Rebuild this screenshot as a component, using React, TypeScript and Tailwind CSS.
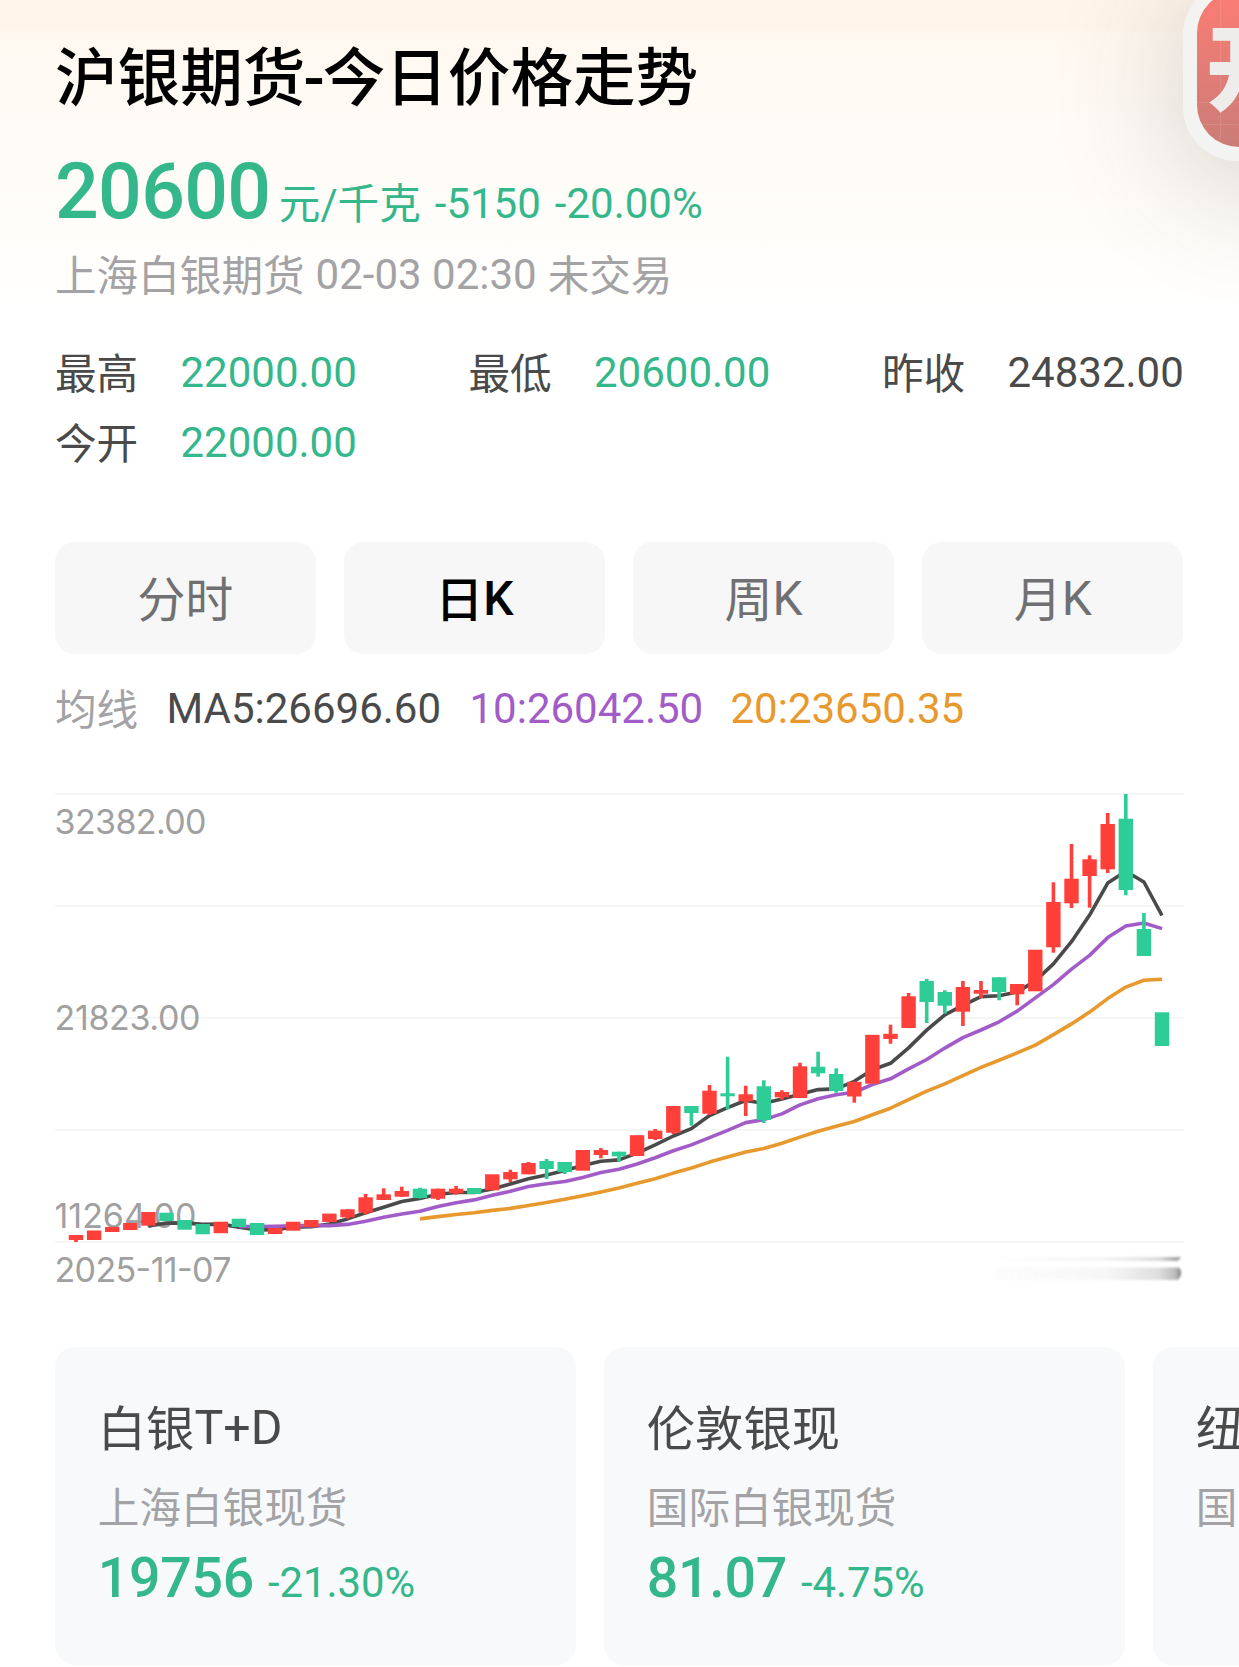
import React from "react";

// [direction, body top, body bottom, wick top, wick bottom]
type Candle = [1 | 0, number, number, number?, number?];

const candles: Candle[] = [
  [1, 1235, 1240, 1235, 1242],
  [1, 1230.5, 1240],
  [1, 1227, 1232],
  [1, 1223, 1230],
  [1, 1212, 1225.7],
  [0, 1212.7, 1221],
  [0, 1220, 1229.7],
  [0, 1224, 1234.3],
  [1, 1221.7, 1233.2],
  [0, 1218.7, 1227],
  [0, 1223, 1235],
  [1, 1228, 1234],
  [1, 1221.7, 1230.7],
  [1, 1220, 1227],
  [1, 1213.6, 1222],
  [1, 1209.3, 1217.3, 1209.3, 1218.7],
  [1, 1197.3, 1212.7, 1194, 1214.3],
  [1, 1194.3, 1200, 1188.3, 1200],
  [1, 1191, 1196.7, 1186.7, 1196.7],
  [0, 1188.7, 1198, 1187.7, 1198.5],
  [1, 1188.7, 1198.7, 1188.7, 1200],
  [1, 1188.7, 1193.3, 1186, 1194.7],
  [0, 1188, 1194],
  [1, 1174.3, 1190.3],
  [1, 1172, 1179.3, 1169.7, 1182],
  [1, 1163, 1174.3, 1162, 1174.3],
  [0, 1161, 1169, 1159, 1179],
  [0, 1162, 1172, 1162, 1174],
  [1, 1150, 1170.7],
  [1, 1150, 1155, 1148, 1158.3],
  [0, 1151.7, 1156.3, 1151.7, 1161.5],
  [1, 1135.2, 1156],
  [1, 1130.7, 1139, 1129, 1140],
  [1, 1106, 1132.7, 1106, 1134],
  [0, 1106, 1113, 1106, 1125.7],
  [1, 1090.7, 1113.7, 1085, 1115],
  [0, 1093.3, 1096.3, 1056.7, 1109.3],
  [1, 1094.3, 1101.3, 1085.7, 1116],
  [0, 1086.3, 1120, 1080.3, 1123],
  [1, 1092, 1097.3, 1090.3, 1099.7],
  [1, 1066.3, 1098, 1062.7, 1098],
  [0, 1066.7, 1073.3, 1051.7, 1076.7],
  [0, 1074, 1091, 1068.3, 1092.7],
  [1, 1081.8, 1096.5, 1081.8, 1102.7],
  [1, 1034.8, 1083.7],
  [1, 1033.8, 1039, 1024.7, 1043.7],
  [1, 996.3, 1028, 993, 1028],
  [0, 981, 1002, 979, 1023],
  [0, 992, 1005.7, 990.3, 1013.7],
  [1, 987, 1011.7, 981, 1026],
  [1, 990, 993.7, 981, 998],
  [0, 977.3, 992, 977.3, 1000.3],
  [1, 984, 994.3, 984, 1005.3],
  [1, 949.7, 991.3],
  [1, 902, 947.3, 882.3, 952.7],
  [1, 878.7, 903.3, 844, 908],
  [1, 859.3, 876, 855.3, 907.7],
  [1, 824, 869.3, 813, 873],
  [0, 818.7, 890, 794, 895.3],
  [0, 929, 956, 913, 956],
  [0, 1012.3, 1046],
];

const RED = "#ff403a";
const GREEN = "#2ecc96";
const centerX = (i: number) => 76 + i * 18.1;
const closeY = (c: Candle) => (c[0] ? c[1] : c[2]);

function average(period: number) {
  const pts: string[] = [];
  for (let i = period - 1; i < candles.length; i++) {
    let sum = 0;
    for (let j = i - period + 1; j <= i; j++) sum += closeY(candles[j]);
    pts.push(`${centerX(i).toFixed(1)},${(sum / period + 0.4).toFixed(1)}`);
  }
  return pts.join(" ");
}

function KChart() {
  return (
    <svg className="block h-[520px] w-[1239px] shrink-0" viewBox="0 780 1239 520">
      <defs>
        <linearGradient id="fadeThin" x1="0" x2="1" y1="0" y2="0">
          <stop offset="0" stopColor="#999" stopOpacity="0" />
          <stop offset="0.6" stopColor="#999" stopOpacity="0.1" />
          <stop offset="0.88" stopColor="#888" stopOpacity="0.3" />
          <stop offset="1" stopColor="#777" stopOpacity="0.75" />
        </linearGradient>
        <linearGradient id="fadeThick" x1="0" x2="1" y1="0" y2="0">
          <stop offset="0" stopColor="#999" stopOpacity="0.02" />
          <stop offset="0.6" stopColor="#999" stopOpacity="0.08" />
          <stop offset="0.88" stopColor="#888" stopOpacity="0.28" />
          <stop offset="0.97" stopColor="#777" stopOpacity="0.5" />
          <stop offset="1" stopColor="#666" stopOpacity="0.85" />
        </linearGradient>
        <filter id="soft" x="-5%" y="-50%" width="110%" height="200%">
          <feGaussianBlur stdDeviation="0.9" />
        </filter>
      </defs>
      {[793.8, 905.8, 1017.8, 1129.8, 1241.8].map((y) => (
        <line key={y} x1="55" x2="1184" y1={y} y2={y} stroke="#f4f4f4" strokeWidth="1.8" />
      ))}
      <g fill="#a0a0a0" fontFamily="Inter, sans-serif" fontSize="34" fontWeight="400">
        <text x="54.5" y="834" textLength="152" lengthAdjust="spacing">32382.00</text>
        <text x="54.5" y="1030" textLength="146" lengthAdjust="spacing">21823.00</text>
        <text x="54.5" y="1228" textLength="142" lengthAdjust="spacing">11264.00</text>
        <text x="54.5" y="1281.5" textLength="177" lengthAdjust="spacing">2025-11-07</text>
      </g>
      <g fill="none" strokeWidth="3.6" strokeLinejoin="round">
        <polyline points={average(5)} stroke="#4a4a4a" />
        <polyline points={average(10)} stroke="#a25cc8" />
        <polyline points={average(20)} stroke="#e8992e" />
      </g>
      {candles.map((c, i) => (
        <g key={i} fill={c[0] ? RED : GREEN}>
          <rect x={centerX(i) - 7.2} y={c[1]} width="14.4" height={c[2] - c[1]} />
          {c[3] !== undefined && c[4] !== undefined && (
            <rect x={centerX(i) - 1.8} y={c[3]} width="3.6" height={c[4] - c[3]} />
          )}
        </g>
      ))}
      <g filter="url(#soft)">
        <path d="M993 1257H1181L1178 1261H993Z" fill="url(#fadeThin)" />
        <path d="M993 1267.5H1179Q1184 1273.5 1178 1280H993Z" fill="url(#fadeThick)" />
      </g>
    </svg>
  );
}

function Stat({ label, value, up }: { label: string; value: string; up?: boolean }) {
  return (
    <div className="flex h-[70px] w-[413.5px] items-center text-[42px] text-[#4a4a4a]">
      <span className="w-[125.5px] pt-[5px] text-[41.6px]">{label}</span>
      <span className={up ? "" : "text-[#34b78b]"}>{value}</span>
    </div>
  );
}

function Tab({ label, suffix, active }: { label: string; suffix?: string; active?: boolean }) {
  return (
    <button
      className={
        active
          ? "flex h-28 flex-1 items-center justify-center rounded-[20px] bg-[#f7f7f7] text-[48px] font-medium text-black"
          : "flex h-28 flex-1 items-center justify-center rounded-[20px] bg-[#f7f7f7] text-[48px] text-[#707072]"
      }
    >
      <span className="pt-[6px]">{label}</span>
      {suffix && <span className="pt-[3px]">{suffix}</span>}
    </button>
  );
}

interface CardProps {
  title: string;
  suffix?: string;
  sub: string;
  price: string;
  pct: string;
}

function Card({ title, suffix, sub, price, pct }: CardProps) {
  return (
    <div className="h-[318px] w-[520.5px] shrink-0 rounded-[20px] bg-[#f8f9fb] pl-[42.5px] pt-[51px]">
      <div className="flex h-[60px] text-[48.3px] leading-[60px] text-[#4a4a4a]">
        <span className="pt-[2px]">{title}</span>
        {suffix && <span>{suffix}</span>}
      </div>
      <div className="mt-[26px] h-[50px] text-[41.6px] leading-[50px] text-[#a3a3a5]">{sub}</div>
      <div className="mt-[11px] flex items-baseline text-[#34b78b]">
        <span className="text-[55.5px] font-medium leading-[68px] tracking-[-0.3px]">{price}</span>
        <span className="ml-[14px] text-[41.8px] leading-[50px]">{pct}</span>
      </div>
    </div>
  );
}

function FloatingBadge() {
  return (
    <div className="absolute left-[1183px] top-[-19px] h-[180px] w-[180px] rounded-[54px] bg-[#f3f3f2] shadow-[0_20px_130px_rgba(60,58,50,0.24)]">
      <div className="absolute left-[14px] top-[10px] h-[156px] w-[156px] overflow-hidden rounded-[42px] bg-linear-to-b from-[#fb7c73] to-[#cb7c77]">
        <div className="absolute left-[23px] top-0 h-full w-px bg-white/10" />
        <div className="absolute left-0 top-[111px] h-px w-full bg-white/10" />
        <div className="absolute left-0 top-[133px] h-px w-full bg-white/10" />
        <span className="absolute left-[9px] top-[34px] text-[93px] font-black leading-[93px] text-[#eeedeb]">开</span>
      </div>
    </div>
  );
}

export default function App() {
  return (
    <div className="relative h-[1667px] w-[1239px] overflow-hidden bg-white font-['Roboto','Noto_Sans_CJK_SC',sans-serif]">
      <div className="absolute inset-x-0 top-0 h-[320px] bg-linear-to-b from-[#fff7ef] via-[#fffcf7] to-white" />
      <div className="absolute inset-x-0 top-0 h-[31px] bg-[#fff5eb]" />
      <FloatingBadge />
      <div className="relative flex flex-col pt-[39px]">
        <div className="px-[55px]">
          <h1 className="flex h-20 text-[62.6px] font-medium leading-[80px] text-black">
            <span>沪银期货</span>
            <span className="-ml-[2px] -mr-[2px]">-</span>
            <span>今日价格走势</span>
          </h1>
          <div className="mt-[27px] flex h-[92px] items-baseline whitespace-pre text-[#34b78b]">
            <span className="text-[77px] font-medium leading-[92px] tracking-[-0.7px]">20600</span>
            <span className="relative top-[1px] ml-[8.5px] text-[41.6px] leading-[50px]">元/千克</span>
            <span className="ml-[14px] text-[42px] leading-[50px]">-5150</span>
            <span className="ml-[14px] text-[42px] leading-[50px]">-20.00%</span>
          </div>
          <div className="mt-[11px] flex h-[50px] gap-[11px] text-[42px] leading-[50px] text-[#a3a3a5]">
            <span className="pt-[3px] text-[41.6px]">上海白银期货</span>
            <span className="pt-px">02-03 02:30</span>
            <span className="pt-[3px] text-[41.6px]">未交易</span>
          </div>
          <div className="mt-[38.5px] flex w-[1250px] flex-wrap">
            <Stat label="最高" value="22000.00" />
            <Stat label="最低" value="20600.00" />
            <Stat label="昨收" value="24832.00" up />
            <Stat label="今开" value="22000.00" />
          </div>
          <div className="mt-[64.2px] flex w-[1128px] gap-[28.6px]">
            <Tab label="分时" />
            <Tab label="日" suffix="K" active />
            <Tab label="周" suffix="K" />
            <Tab label="月" suffix="K" />
          </div>
          <div className="mt-[29.6px] flex h-[50px] text-[42px] leading-[50px]">
            <span className="w-[111.5px] pt-[3px] text-[41.6px] text-[#a3a3a5]">均线</span>
            <span className="w-[303px] pt-px text-[#4a4a4a]">MA5:26696.60</span>
            <span className="w-[261px] pt-px text-[#a25cc8]">10:26042.50</span>
            <span className="pt-px text-[#e8992e]">20:23650.35</span>
          </div>
        </div>
        <div className="mt-[46.7px]">
          <KChart />
        </div>
        <div className="mt-[46.7px] flex gap-[28.5px] pl-[55.3px]">
          <Card title="白银" suffix="T+D" sub="上海白银现货" price="19756" pct="-21.30%" />
          <Card title="伦敦银现" sub="国际白银现货" price="81.07" pct="-4.75%" />
          <Card title="纽约银" sub="国际白银期货" price="" pct="" />
        </div>
      </div>
    </div>
  );
}
